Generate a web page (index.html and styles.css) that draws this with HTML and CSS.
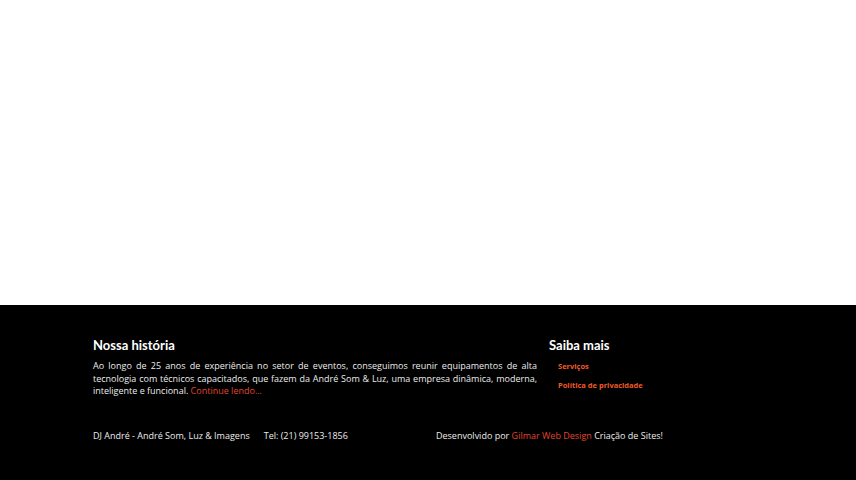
FILE: index.html
```html
<!DOCTYPE html>
<html lang="pt-BR">
<head>
<meta charset="utf-8">
<title>André Som & Luz</title>
<link rel="stylesheet" href="styles.css">
</head>
<body>
<main class="blank"></main>
<footer class="footer">
  <div class="cols">
    <section class="about">
      <h3 class="title">Nossa história</h3>
      <p class="text">Ao longo de 25 anos de experiência no setor de eventos, conseguimos reunir equipamentos de alta tecnologia com técnicos capacitados, que fazem da André Som &amp; Luz, uma empresa dinâmica, moderna, inteligente e funcional. <a class="link" href="#">Continue lendo...</a></p>
    </section>
    <section class="more">
      <h3 class="title">Saiba mais</h3>
      <ul class="menu">
        <li><a class="menu-link" href="#">Serviços</a></li>
        <li><a class="menu-link" href="#">Política de privacidade</a></li>
      </ul>
    </section>
  </div>
  <div class="bottom">
    <div class="bottom-left"><span>DJ André - André Som, Luz &amp; Imagens</span><span>Tel: (21) 99153-1856</span></div>
    <div class="bottom-right">Desenvolvido por <a class="link" href="#">Gilmar Web Design</a> Criação de Sites!</div>
  </div>
</footer>
</body>
</html>
```
FILE: styles.css
```css
* { box-sizing: border-box; }
html, body { margin: 0; padding: 0; }
body { background: #fff; font-family: "Open Sans", "Noto Sans", sans-serif; width: 856px; height: 480px; overflow: hidden; }
.blank { height: 305px; background: #fff; }
.footer { background: #000; height: 175px; padding: 31px 0 0 93px; color: #f2f2f2; }
.cols { display: flex; gap: 12px; }
.about { width: 444px; }
.more { width: 200px; }
.title { margin: 0 0 6px; font-size: 13px; font-weight: 700; color: #fff; line-height: 18px; font-family: Lato, "Open Sans", sans-serif; }
.text { margin: 0; font-size: 9px; line-height: 12.6px; text-align: justify; color: #ececec; }
.link { color: #e2462a; text-decoration: none; }
.menu { list-style: none; margin: -3px 0 0; padding: 0 0 0 9px; display: flex; flex-direction: column; gap: 6px; }
.menu li { line-height: 13px; height: 13px; }
.menu-link { color: #f05a28; font-size: 7.5px; font-weight: 700; text-decoration: none; }
.bottom { display: flex; margin-top: 31px; font-size: 9px; color: #ececec; }
.bottom-left { width: 343px; display: flex; gap: 14px; }
```
